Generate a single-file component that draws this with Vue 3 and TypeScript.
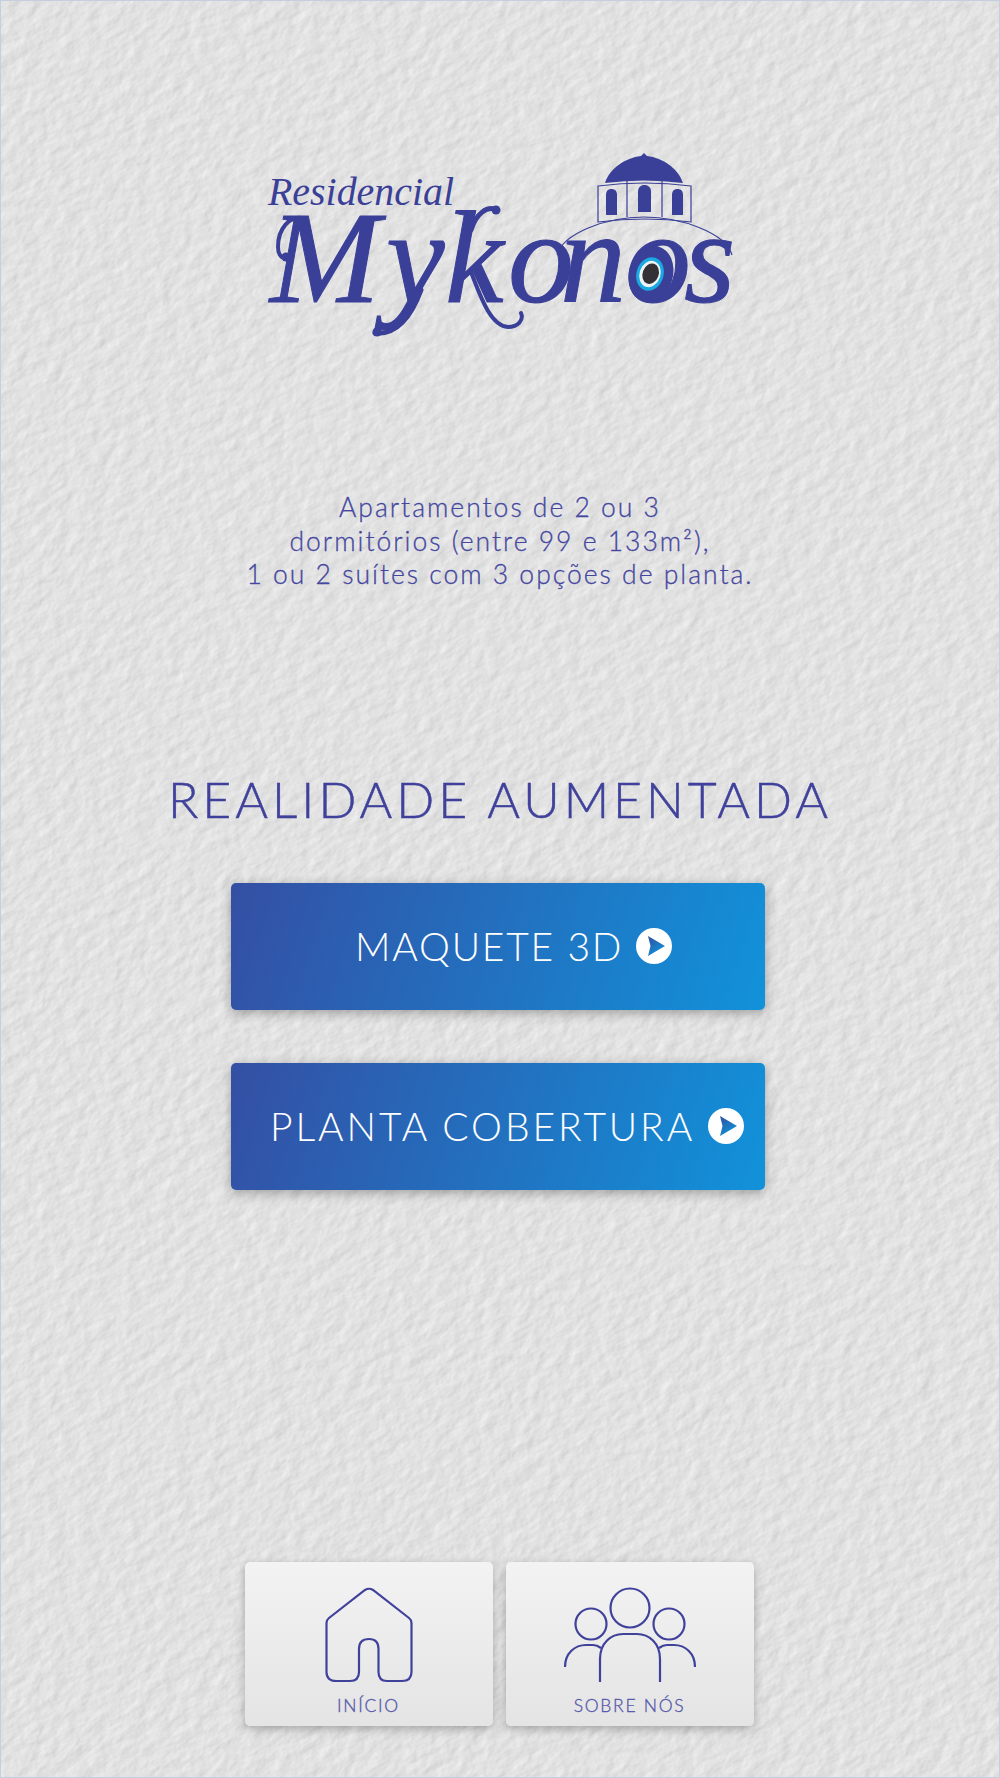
<template>
  <div class="page">
    <svg class="paper" aria-hidden="true">
      <filter id="paper-grain" x="0" y="0" width="100%" height="100%" color-interpolation-filters="sRGB">
        <feTurbulence type="fractalNoise" baseFrequency="0.06 0.085" numOctaves="5" seed="11" />
        <feDiffuseLighting surfaceScale="0.5" diffuseConstant="1.02" lighting-color="#ffffff">
          <feDistantLight azimuth="235" elevation="60" />
        </feDiffuseLighting>
      </filter>
      <rect width="100%" height="100%" filter="url(#paper-grain)" />
    </svg>

    <svg class="logo" viewBox="0 0 520 230" role="img" aria-label="Residencial Mykonos">
      <text class="logo-small" x="28" y="75" textLength="186" lengthAdjust="spacingAndGlyphs">Residencial</text>
      <text class="logo-big" x="30 146 205 268 320 385 444" y="172">Mykonos</text>

      <!-- flourishes of the logotype -->
      <g fill="none" stroke="#3a3f98" stroke-linecap="round">
        <path d="M62 88 C50 86 38 98 38 117 C38 126 44 131 47 126" stroke-width="4" />
        <path d="M231 100 C236 84 247 75 257 80" stroke-width="5" />
        <path d="M231 142 C240 165 250 196 268 197 C278 197 284 190 281 183" stroke-width="4" />
        <path d="M181 160 C170 190 155 205 135 203" stroke-width="5" />
      </g>
      <circle cx="46" cy="127" r="4.500" fill="#3a3f98" />
      <circle cx="137" cy="202" r="4.500" fill="#3a3f98" />
      <circle cx="256" cy="80" r="4.500" fill="#3a3f98" />

      <!-- dome -->
      <g fill="#3a3f98">
        <path d="M365 53 c5-15 20-25 36-27 l3-3 l3 3 c16 2 31 12 36 27 q-39-5-78 0 z" />
        <path d="M366 85 h11 v-20 c0-4-2-6-5.500-6 s-5.500 2-5.500 6 z" />
        <path d="M398 82 h13 v-20 c0-5-3-7-6.500-7 s-6.500 2-6.500 7 z" />
        <path d="M432 85 h11 v-20 c0-4-2-6-5.500-6 s-5.500 2-5.500 6 z" />
      </g>
      <g fill="none" stroke="#3a3f98" stroke-width="1.200">
        <path d="M358 56 q46-6 93 0 v36 q-46-6-93 0 z" />
        <path d="M387 51 v36 M422 51 v36" />
        <path d="M317 125 c6-22 50-38 87-38 s82 16 88 38" />
      </g>

      <!-- eye -->
      <ellipse cx="411" cy="144" rx="22" ry="28.500" transform="rotate(15 411 144)" fill="#3a3f98" />
      <ellipse cx="410" cy="144" rx="13.500" ry="17" transform="rotate(18 410 144)" fill="#1aa9e2" />
      <ellipse cx="410" cy="144" rx="10.500" ry="13.500" transform="rotate(18 410 144)" fill="#eef3f6" />
      <ellipse cx="410.500" cy="143.500" rx="8" ry="10.500" transform="rotate(20 410 144)" fill="#333133" />
    </svg>

    <p class="intro">
      Apartamentos de 2 ou 3<br />
      dormitórios (entre 99 e 133m²),<br />
      1 ou 2 suítes com 3 opções de planta.
    </p>

    <h1 class="title">REALIDADE AUMENTADA</h1>

    <div class="actions">
      <button v-for="action in actions" :key="action.label" class="action" :class="action.cls">
        <span>{{ action.label }}</span>
        <svg class="play" viewBox="-18 -18 36 36" aria-hidden="true">
          <defs>
            <linearGradient :id="action.cls" x1="0" y1="0" x2="0.6" y2="1">
              <stop offset="0" stop-color="#31509f" />
              <stop offset="1" stop-color="#1192da" />
            </linearGradient>
          </defs>
          <circle r="18" fill="#fff" />
          <path d="M-6-10 L11 0 L-6 10 L-3.500 0 Z" :fill="`url(#${action.cls})`" />
        </svg>
      </button>
    </div>

    <nav class="bottom-nav">
      <a class="nav-card">
        <svg class="nav-icon" width="90" height="96" viewBox="0 0 90 96" aria-hidden="true">
          <path
            d="M2.500 36 Q2.500 33 5 31 L41 3 Q45 0.500 49 3 L85 31 Q87.500 33 87.500 36 V85 Q87.500 94 78 94 H63 Q54.500 94 54.500 85 V62 Q54.500 52 45 52 Q35 52 35 62 V85 Q35 94 26 94 H12 Q2.500 94 2.500 85 Z"
          />
        </svg>
        <span>INÍCIO</span>
      </a>
      <a class="nav-card">
        <svg class="nav-icon" width="134" height="96" viewBox="0 0 134 96" aria-hidden="true">
          <circle cx="67" cy="21" r="19.500" />
          <circle cx="28" cy="37" r="15.500" />
          <circle cx="106" cy="37" r="15.500" />
          <path d="M37 95 V72 C37 56 48 47 60 47 H74 C86 47 97 56 97 72 V95" />
          <path d="M2 80 C2 66 12 58 23 58 H30 Q34 58 38 61" />
          <path d="M132 80 C132 66 122 58 111 58 H104 Q100 58 96 61" />
        </svg>
        <span>SOBRE NÓS</span>
      </a>
    </nav>
  </div>
</template>

<script setup lang="ts">
// ボタンの一覧
const actions = [
  { label: 'MAQUETE 3D', cls: 'maquete' },
  { label: 'PLANTA COBERTURA', cls: 'planta' },
]
</script>

<style>
html,
body {
  margin: 0;
  background: #dcdcdc;
}
</style>

<style scoped>
.page {
  position: relative;
  width: 1000px;
  height: 1778px;
  overflow: hidden;
  display: flex;
  flex-direction: column;
  align-items: center;
  font-family: Lato, 'Liberation Sans', sans-serif;
}
.page::after {
  content: '';
  position: absolute;
  inset: 0;
  box-shadow: inset 0 0 0 1px #c4cfe0;
  pointer-events: none;
}
.paper {
  position: absolute;
  left: -700px;
  top: -400px;
  width: 2400px;
  height: 2600px;
  transform: rotate(-32deg);
}
.logo {
  position: relative;
  flex: none;
  width: 520px;
  height: 230px;
  margin-top: 130px;
}
.logo text {
  font-family: 'Liberation Serif', serif;
  font-style: italic;
  fill: #3a3f98;
}
.logo-small {
  font-size: 41px;
}
.logo-big {
  font-size: 132px;
  stroke: #3a3f98;
  stroke-width: 1;
}
.intro {
  position: relative;
  margin: 131px 0 0;
  font-size: 26.5px;
  font-weight: 300;
  -webkit-text-stroke: 0.3px #45479f;
  line-height: 33.5px;
  letter-spacing: 2px;
  text-align: center;
  color: #45479f;
}
.title {
  position: relative;
  margin: 177px 0 0;
  font-size: 50px;
  font-weight: 300;
  -webkit-text-stroke: 0.5px #3f419b;
  line-height: 60px;
  letter-spacing: 4px;
  color: #3f419b;
  white-space: nowrap;
}
.actions {
  position: relative;
  margin: 54px 4px 0 0;
  display: flex;
  flex-direction: column;
  gap: 53px;
}
.action {
  display: flex;
  align-items: center;
  gap: 13px;
  width: 534px;
  height: 127px;
  border: 0;
  border-radius: 5px;
  background: linear-gradient(108deg, #344fa4 0%, #1192da 100%);
  box-shadow: 0 3px 12px rgba(0, 0, 0, 0.3);
  font-family: inherit;
  font-size: 39px;
  font-weight: 300;
  color: #fff;
  white-space: nowrap;
}
.action.maquete {
  padding-left: 124px;
  letter-spacing: 1.8px;
}
.action.planta {
  padding-left: 39px;
  letter-spacing: 2.9px;
}
.play {
  width: 36px;
  height: 36px;
  flex: none;
}
.bottom-nav {
  position: relative;
  margin: 372px 2px 0 0;
  display: flex;
  gap: 13px;
}
.nav-card {
  width: 248px;
  height: 164px;
  display: flex;
  flex-direction: column;
  align-items: center;
  border-radius: 5px;
  background: linear-gradient(180deg, #f3f3f3 0%, #e4e4e4 100%);
  box-shadow: 0 3px 10px rgba(0, 0, 0, 0.28);
  color: #5557aa;
  font-size: 17.5px;
  font-weight: 300;
  -webkit-text-stroke: 0.3px #5557aa;
  letter-spacing: 1.7px;
}
.nav-icon {
  margin-top: 25px;
  fill: none;
  stroke: #3f419b;
  stroke-width: 2.2;
}
.nav-card span {
  margin-top: 12px;
}
</style>
